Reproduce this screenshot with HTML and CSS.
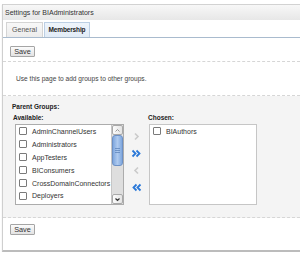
FILE: index.html
```html
<!DOCTYPE html>
<html>
<head>
<meta charset="utf-8">
<link rel="stylesheet" href="styles.css">
</head>
<body>
<div class="panel">
  <div class="header">Settings for BIAdministrators</div>
  <div class="tabs">
    <div class="tab general">General</div>
    <div class="tab active">Membership</div>
  </div>
  <div class="bar"><button class="btn">Save</button></div>
  <div class="desc">Use this page to add groups to other groups.</div>
  <div class="groups">
    <div class="title">Parent Groups:</div>
    <div class="shuttle">
      <div class="col">
        <div class="label">Available:</div>
        <div class="listbox avail">
          <div class="items">
            <div class="item"><span class="cb"></span>AdminChannelUsers</div>
            <div class="item"><span class="cb"></span>Administrators</div>
            <div class="item"><span class="cb"></span>AppTesters</div>
            <div class="item"><span class="cb"></span>BIConsumers</div>
            <div class="item"><span class="cb"></span>CrossDomainConnectors</div>
            <div class="item"><span class="cb"></span>Deployers</div>
            <div class="item"><span class="cb"></span></div>
          </div>
          <div class="scroll">
            <div class="sbtn"><svg width="7" height="5" viewBox="0 0 7 5"><path d="M1.5 3.5 L3.5 1.5 L5.5 3.5" fill="none" stroke="#999" stroke-width="1"/></svg></div>
            <div class="thumb"><svg width="5" height="5" viewBox="0 0 5 5"><path d="M0 0.5H5M0 2.5H5M0 4.5H5" stroke="#5f86bd" stroke-width="0.8"/></svg></div>
            <div class="track"></div>
            <div class="sbtn"><svg width="7" height="5" viewBox="0 0 7 5"><path d="M1.5 1.5 L3.5 3.5 L5.5 1.5" fill="none" stroke="#333" stroke-width="1.2"/></svg></div>
          </div>
        </div>
      </div>
      <div class="arrows">
        <svg width="9" height="9" viewBox="0 0 9 9"><path d="M3 1.5 L6 4.5 L3 7.5" fill="none" stroke="#cacaca" stroke-width="1.6"/></svg>
        <svg width="11" height="9" viewBox="0 0 11 9"><path d="M1.5 1.5 L4.5 4.5 L1.5 7.5 M5.5 1.5 L8.5 4.5 L5.5 7.5" fill="none" stroke="#2a78d8" stroke-width="1.8"/></svg>
        <svg width="9" height="9" viewBox="0 0 9 9"><path d="M6 1.5 L3 4.5 L6 7.5" fill="none" stroke="#cacaca" stroke-width="1.6"/></svg>
        <svg width="11" height="9" viewBox="0 0 11 9"><path d="M9.5 1.5 L6.5 4.5 L9.5 7.5 M5.5 1.5 L2.5 4.5 L5.5 7.5" fill="none" stroke="#2a78d8" stroke-width="1.8"/></svg>
      </div>
      <div class="col">
        <div class="label chosen-label">Chosen:</div>
        <div class="listbox chosen">
          <div class="items">
            <div class="item"><span class="cb"></span>BIAuthors</div>
          </div>
        </div>
      </div>
    </div>
  </div>
  <div class="bar bottom"><button class="btn">Save</button></div>
</div>
</body>
</html>
```
FILE: styles.css
```css
html, body {
  margin: 0;
  padding: 0;
  background: #fff;
}
body {
  font-family: "Liberation Sans", Arial, sans-serif;
  font-size: 7px;
  color: #333;
}
.panel {
  margin: 4px 0 0 2px;
  border-left: 1px solid #cfcfcf;
  border-bottom: 2px solid #bcbcbc;
  box-shadow: 0 1px 1px #dcdcdc;
}
.header {
  height: 15px;
  line-height: 15px;
  border-top: 1px solid #d2d2d2;
  background: linear-gradient(#f7f7f7, #e7e7e7);
  padding-left: 2px;
  color: #333;
}
.tabs {
  display: flex;
  padding: 2px 0 0 3px;
  border-bottom: 1px solid #a9bbce;
}
.tab {
  height: 14px;
  line-height: 14px;
  text-align: center;
  border: 1px solid #d4d4d4;
  border-bottom: none;
  background: linear-gradient(#f8f8f8, #ececec);
  color: #555;
}
.general {
  width: 35px;
}
.tab.active {
  width: 44px;
  margin-left: 1px;
  background: linear-gradient(#eef4fb, #e2ecf7);
  border-color: #bccfe4;
  font-weight: bold;
  font-size: 6.5px;
  letter-spacing: -0.15px;
  color: #222;
}
.bar {
  padding: 8px 7px 4px;
  border-bottom: 1px dashed #d6d6d6;
}
.btn {
  display: block;
  box-sizing: border-box;
  width: 25px;
  height: 11px;
  padding: 0;
  margin: 0;
  font-family: "Liberation Sans", Arial, sans-serif;
  font-size: 7.3px;
  line-height: 9px;
  color: #333;
  border: 1px solid #a5a5a5;
  border-radius: 1px;
  background: linear-gradient(#fbfbfb, #e3e3e3);
}
.desc {
  padding: 12px 13px 0;
  height: 21px;
  line-height: 9px;
  font-size: 6.6px;
  border-bottom: 1px dashed #d6d6d6;
  color: #444;
}
.groups {
  background: #f4f4f4;
  padding: 6px 0 12px 9px;
  border-bottom: 1px dashed #d6d6d6;
}
.title {
  font-weight: bold;
  font-size: 6.5px;
  color: #222;
  line-height: 10px;
}
.shuttle {
  display: flex;
  align-items: flex-start;
}
.col {
  display: flex;
  flex-direction: column;
}
.label {
  font-weight: bold;
  font-size: 6.5px;
  color: #222;
  line-height: 10px;
  margin: 1px 0 1px 1px;
}
.chosen-label {
  margin-left: 0;
}
.listbox {
  background: #fff;
  border: 1px solid #acacac;
  display: flex;
  overflow: hidden;
}
.avail {
  margin-left: 3px;
  width: 107px;
  height: 79px;
}
.chosen {
  margin-left: 1px;
  width: 106px;
  height: 79px;
  border-color: #c6c6c6;
}
.items {
  flex: 1;
  min-width: 0;
}
.item {
  display: flex;
  align-items: center;
  height: 12.9px;
  color: #333;
  white-space: nowrap;
}
.cb {
  box-sizing: border-box;
  width: 8px;
  height: 8px;
  border: 1px solid #7a7a7a;
  border-radius: 1px;
  background: #fff;
  margin: 0 5px 0 3px;
  flex: none;
}
.scroll {
  width: 12px;
  box-sizing: border-box;
  display: flex;
  flex-direction: column;
  background: #e4e4e4;
  border-left: 1px solid #c6c6c6;
}
.sbtn {
  box-sizing: border-box;
  height: 10px;
  display: flex;
  align-items: center;
  justify-content: center;
  background: linear-gradient(90deg, #fcfcfc, #e4e4e4);
  border: 1px solid #a9a9a9;
  border-radius: 2px;
}
.thumb {
  box-sizing: border-box;
  height: 31px;
  display: flex;
  align-items: center;
  justify-content: center;
  background: linear-gradient(90deg, #7fa7de, #aecaef 50%, #7fa7de);
  border: 1px solid #6d91c6;
  border-radius: 3px;
}
.track {
  flex: 1;
  background: #dedede;
}
.arrows {
  display: flex;
  flex-direction: column;
  align-items: center;
  gap: 8px;
  width: 24px;
  padding-top: 20px;
}
.bottom {
  padding: 6px 7px 15px;
  border-bottom: none;
}
```
